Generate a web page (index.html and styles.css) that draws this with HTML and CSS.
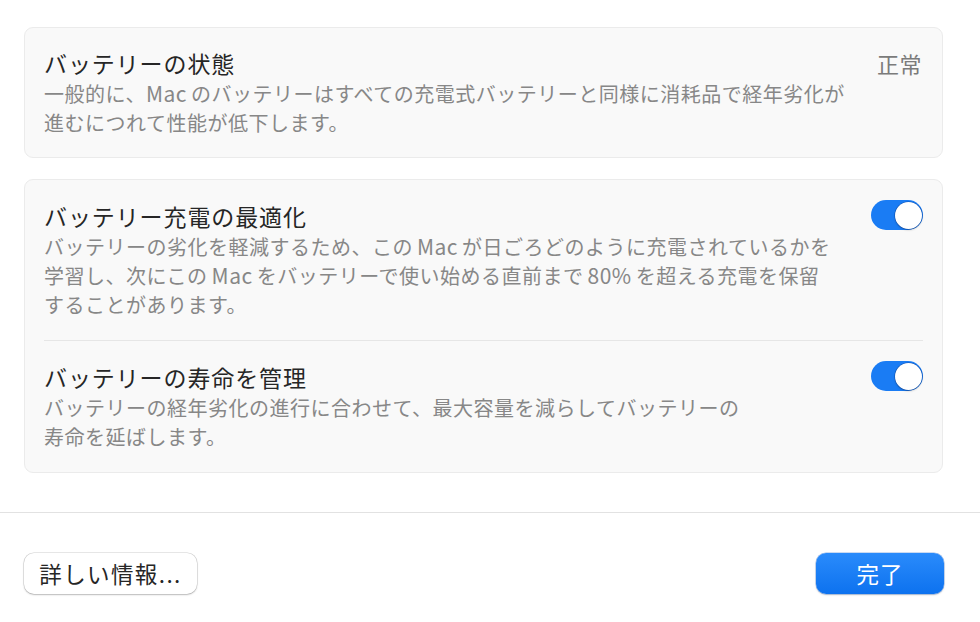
FILE: index.html
```html
<!DOCTYPE html>
<html lang="ja">
<head>
<meta charset="utf-8">
<link rel="stylesheet" href="styles.css">
</head>
<body>
<main class="content">
  <section class="card">
    <div class="row">
      <div class="text">
        <div class="title">バッテリーの状態</div>
        <div class="desc">一般的に、<span class="latin first">Mac</span>のバッテリーはすべての充電式バッテリーと同様に消耗品で経年劣化が<br>進むにつれて性能が低下します。</div>
      </div>
      <div class="value">正常</div>
    </div>
  </section>
  <section class="card tall">
    <div class="row">
      <div class="text">
        <div class="title">バッテリー充電の最適化</div>
        <div class="desc">バッテリーの劣化を軽減するため、この<span class="latin">Mac</span>が日ごろどのように充電されているかを<br>学習し、次にこの<span class="latin">Mac</span>をバッテリーで使い始める直前まで<span class="latin">80%</span>を超える充電を保留<br>することがあります。</div>
      </div>
      <div class="toggle"><span class="knob"></span></div>
    </div>
    <div class="sep"></div>
    <div class="row">
      <div class="text">
        <div class="title">バッテリーの寿命を管理</div>
        <div class="desc">バッテリーの経年劣化の進行に合わせて、最大容量を減らしてバッテリーの<br>寿命を延ばします。</div>
      </div>
      <div class="toggle"><span class="knob"></span></div>
    </div>
  </section>
</main>
<footer class="footer">
  <button class="btn">詳しい情報...</button>
  <button class="btn primary">完了</button>
</footer>
</body>
</html>
```

FILE: styles.css
```css
* { box-sizing: border-box; }
html, body {
  margin: 0;
  padding: 0;
  background: #ffffff;
  width: 980px;
  height: 622px;
  overflow: hidden;
  font-family: "Noto Sans CJK JP", "Noto Sans", sans-serif;
}
.content {
  padding: 27px 37px 0 24px;
  display: flex;
  flex-direction: column;
  gap: 21px;
  height: 512px;
}
.card {
  background: #f9f9f9;
  border: 1px solid #ebebeb;
  border-radius: 9px;
  padding: 0 19px;
}
.row {
  display: flex;
  justify-content: space-between;
  align-items: flex-start;
  padding: 19px 0 20px;
}
.tall .row {
  padding: 20px 0 21px;
}
.title {
  font-size: 23px;
  line-height: 32px;
  color: #262626;
  letter-spacing: 0.9px;
  white-space: nowrap;
}
.desc {
  font-size: 20px;
  line-height: 29px;
  color: #878787;
  letter-spacing: 0.5px;
  white-space: nowrap;
}
.latin {
  margin: 0 4px;
  font-size: 21px;
}
.latin.first {
  margin-left: 0;
}
.value {
  font-size: 22px;
  line-height: 32px;
  color: #7b7b7b;
  letter-spacing: 0.5px;
  padding-right: 1px;
}
.sep {
  height: 1px;
  background: #e6e6e6;
}
.toggle {
  width: 52px;
  height: 30px;
  border-radius: 15px;
  background: #1a7cf4;
  margin-top: 0;
  display: flex;
  justify-content: flex-end;
  align-items: center;
  padding: 0 1.5px;
}
.knob {
  width: 27px;
  height: 27px;
  border-radius: 50%;
  background: #ffffff;
  box-shadow: 0 0 0 0.5px rgba(0, 40, 120, 0.45), 0 1px 2px rgba(0, 0, 0, 0.25);
}
.footer {
  border-top: 1px solid #e2e2e2;
  height: 110px;
  display: flex;
  justify-content: space-between;
  align-items: flex-start;
  padding: 40px 36px 0 24px;
}
.btn {
  font-family: "Noto Sans CJK JP", "Noto Sans", sans-serif;
  font-size: 22.5px;
  line-height: 30px;
  height: 41px;
  border-radius: 10px;
  border: none;
  background: #ffffff;
  color: #262626;
  padding: 0 0 2px 0;
  width: 173px;
  box-shadow: 0 0 0 0.5px rgba(0, 0, 0, 0.18), 0 1px 2px rgba(0, 0, 0, 0.2);
  letter-spacing: 1.4px;
}
.btn.primary {
  width: 128px;
  color: #ffffff;
  letter-spacing: 1px;
  background: linear-gradient(#2a8bfb, #0d72ef);
  box-shadow: 0 0 0 0.5px rgba(0, 80, 200, 0.4), 0 1px 2px rgba(0, 0, 0, 0.2);
}
```
